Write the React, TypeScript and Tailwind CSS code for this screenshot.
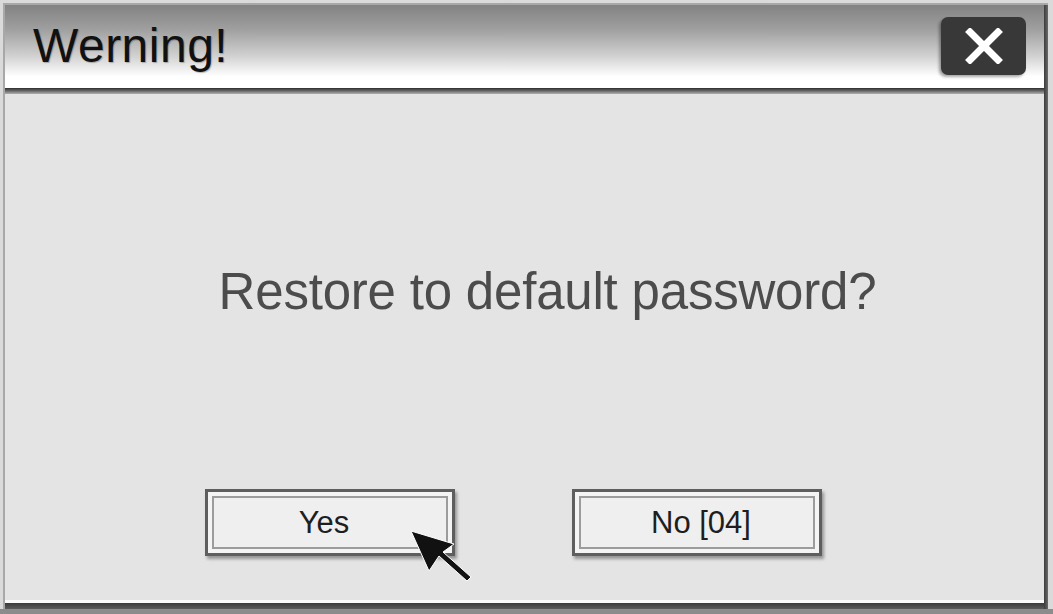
import React from "react";

const font = { fontFamily: '"Liberation Sans", Arial, sans-serif' };

function DialogButton({ label, shift }: { label: string; shift: string }) {
  return (
    <div className="w-[250px] h-[67px] border-[3px] border-[#5e5e5e] bg-[#f4f4f4] p-[4px] shadow-[2px_3px_3px_rgba(0,0,0,0.35)]">
      <div className="w-full h-full border-2 border-[#9c9c9c] bg-[#efefef] flex items-center justify-center">
        <span className={"text-[31px] leading-none text-[#1e1e1e] " + shift}>{label}</span>
      </div>
    </div>
  );
}

function Cursor() {
  return (
    <svg
      className="absolute left-[400px] top-[500px]"
      width="80"
      height="90"
      viewBox="0 0 80 90"
    >
      <polygon
        points="11,31 54,44 43,52 71,77 67,81 39,56 29,71"
        fill="#111"
        stroke="#fff"
        strokeWidth="1"
      />
    </svg>
  );
}

export default function App() {
  return (
    <div className="relative w-[1053px] h-[614px] bg-[#dadada] overflow-hidden" style={font}>
      <div className="absolute left-0 right-0 bottom-0 h-[5px] bg-[#8c8c8c]" />
      <div className="ml-[3px] pt-[3px] w-[1045px]">
        <div className="flex border-l-2 border-t-2 border-[#a8a8a8]">
          <div className="flex-1 flex flex-col">
            {/* title bar */}
            <div className="h-[83px] flex items-start justify-between bg-[linear-gradient(to_bottom,#828282_0%,#a0a0a0_30%,#d2d2d2_62%,#ffffff_86%,#ffffff_100%)]">
              <h1 className="ml-[28px] mt-[17px] text-[48px] leading-none text-[#111] tracking-[0.5px] [text-shadow:1px_1px_1px_rgba(0,0,0,0.25)]">
                Werning!
              </h1>
              <button className="mt-[12px] mr-[18px] w-[85px] h-[58px] rounded-[7px] bg-[#383838] flex items-center justify-center shadow-[-2px_2px_3px_rgba(0,0,0,0.35)]">
                <svg width="40" height="36" viewBox="0 0 40 36">
                  <path d="M6 4 L34 32 M34 4 L6 32" stroke="#fff" strokeWidth="7" strokeLinecap="square" />
                </svg>
              </button>
            </div>
            <div className="h-[6px] bg-[linear-gradient(to_bottom,#2e2e2e,#6a6a6a,#b0b0b0)]" />
            {/* body */}
            <div className="h-[506px] bg-[#e4e4e4] flex flex-col">
              <div className="mt-[172px] pl-[46px] flex justify-center">
                <p className="text-[51px] leading-none text-[#4c4c4c] tracking-[-0.2px]">
                  Restore to default password?
                </p>
              </div>
              <div className="mt-[172px] ml-[200px] flex gap-[117px]">
                <DialogButton label="Yes" shift="mr-[12px]" />
                <DialogButton label="No [04]" shift="ml-[8px]" />
              </div>
            </div>
            <div className="h-[3px] bg-[#fafafa]" />
            <div className="h-[6px] bg-[linear-gradient(to_bottom,#3a3a3a,#5a5a5a)]" />
          </div>
          <div className="w-[4px] bg-[linear-gradient(to_right,#3c3c3c,#6a6a6a)]" />
        </div>
      </div>
      <Cursor />
    </div>
  );
}
